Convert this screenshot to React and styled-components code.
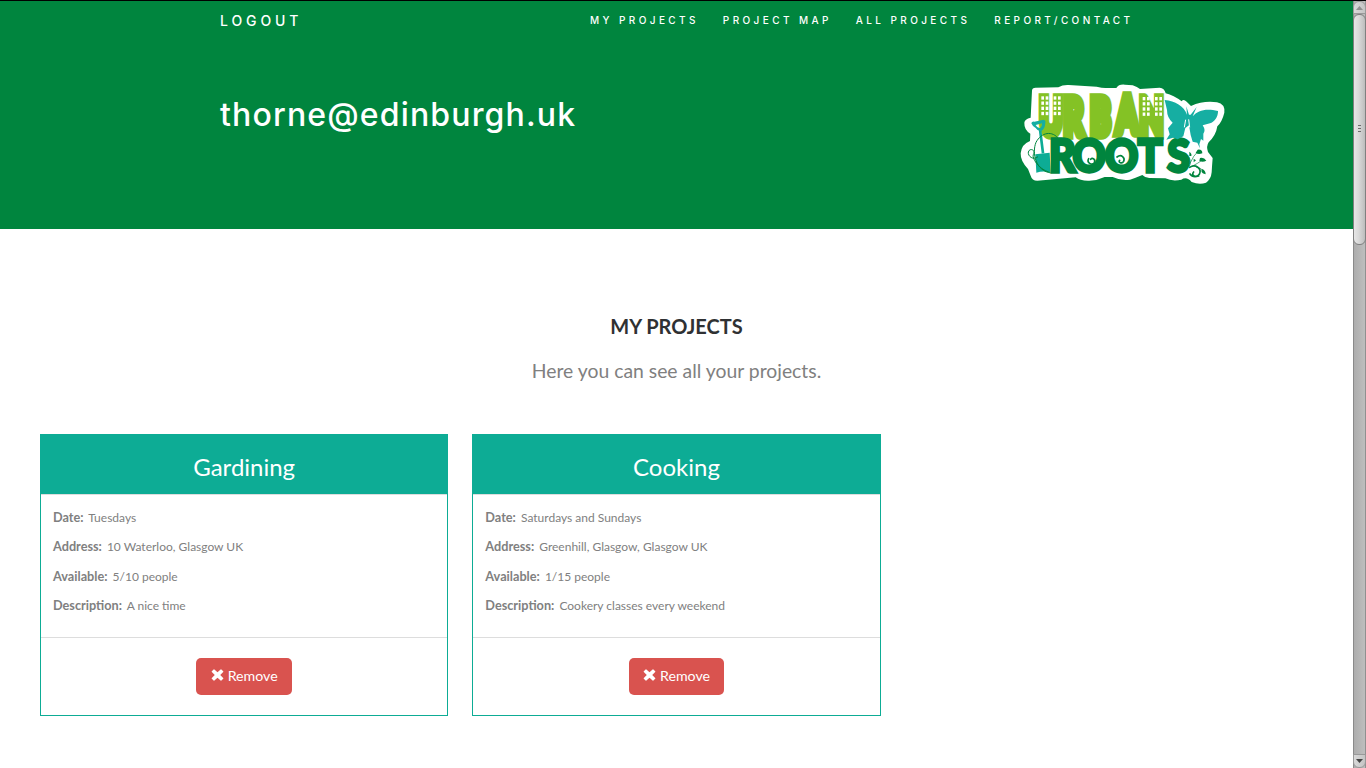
import React from "react";
import styled, { createGlobalStyle } from "styled-components";

const GlobalStyle = createGlobalStyle`
  * { box-sizing: border-box; }
  body { margin: 0; background: #fff; overflow: hidden; font-family: Lato, "Liberation Sans", sans-serif; }
`;

const Screen = styled.div`
  display: flex;
  height: 768px;
  border-top: 1px solid #000;
`;

const Page = styled.div`
  flex: 1;
  min-width: 0;
`;

const Header = styled.header`
  height: 228px;
  background: #00853e;
  color: #fff;
  font-family: Inter, "Liberation Sans", sans-serif;
`;

const Nav = styled.nav`
  display: flex;
  justify-content: space-between;
  align-items: center;
  height: 40px;
  padding: 0 219.5px 0 220px;
`;

const NavLinks = styled.div`
  display: flex;
  gap: 24px;
  padding-bottom: 2px;
`;

const NavLink = styled.a`
  font-size: ${(p) => (p.$large ? 14 : 10)}px;
  font-weight: 500;
  letter-spacing: ${(p) => p.$spacing}px;
  line-height: 20px;
  white-space: nowrap;
`;

const Banner = styled.div`
  display: flex;
  justify-content: space-between;
  padding: 34px 118px 0 220px;
`;

const Email = styled.h1`
  margin: 20px 0 0;
  font-size: 32px;
  font-weight: 500;
  line-height: 40px;
  letter-spacing: 1.15px;
`;

const LogoArt = styled.svg`
  display: block;
  width: 225px;
  height: 120px;
`;

const Intro = styled.section`
  padding-top: 84px;
  text-align: center;
`;

const Title = styled.h2`
  margin: 0;
  font-size: 20px;
  font-weight: 700;
  line-height: 26px;
  color: #2f3133;
`;

const Lead = styled.p`
  margin: 18px 0 0;
  font-size: 19.35px;
  line-height: 28px;
  color: #808080;
`;

const Projects = styled.section`
  display: grid;
  grid-template-columns: repeat(3, 1fr);
  padding: 49px 28px 0;
`;

const Card = styled.article`
  height: 282px;
  margin: 0 12px;
  border: 1px solid #0dac95;
  font-size: 12px;
  color: #808080;
`;

const CardTitle = styled.h3`
  margin: 0;
  height: 60px;
  padding-top: 16px;
  border-bottom: 1px solid #ddd;
  background: #0dac95;
  color: #fff;
  font-size: 24px;
  font-weight: 400;
  line-height: 32px;
  text-align: center;
`;

const Details = styled.div`
  height: 142px;
  padding: 8px 12px 0;
`;

const Detail = styled.div`
  height: 29.33px;
  font-size: 12px;
  line-height: 29px;
`;

const Label = styled.strong`
  font-size: 12.7px;
  font-weight: 700;
  margin-right: 2px;
`;

const CardFooter = styled.footer`
  display: flex;
  justify-content: center;
  padding-top: 20px;
  border-top: 1px solid #ddd;
`;

const RemoveButton = styled.button`
  display: flex;
  align-items: center;
  justify-content: center;
  gap: 4px;
  width: 95.4px;
  height: 37px;
  padding: 0 0 2px;
  border: 0;
  border-radius: 5px;
  background: #d9534f;
  color: #fff;
  font: 14.2px/20px Lato, sans-serif;
`;

const Cross = styled.svg`
  width: 13px;
  height: 12px;
  margin-top: -1px;
  fill: #fff;
`;

const Scrollbar = styled.div`
  display: flex;
  flex-direction: column;
  width: 13px;
  background: linear-gradient(90deg, #8a8a8a 0 1px, #adadad 1px, #bebebe 12px, #909090 12px);
`;

const ScrollArrow = styled.div`
  display: flex;
  align-items: center;
  justify-content: center;
  height: ${(p) => (p.$down ? 14 : 13)}px;
  border: 1px solid #999;
  border-radius: ${(p) => (p.$down ? "0 0 6px 6px" : "6px 6px 0 0")};
  background: linear-gradient(90deg, #d9d9d9, #c4c4c4);
`;

const Thumb = styled.div`
  display: flex;
  flex-direction: column;
  align-items: center;
  justify-content: center;
  gap: 2px;
  height: 231px;
  padding-bottom: 2px;
  margin-bottom: auto;
  border: 1px solid #808080;
  border-radius: 6px;
  background: linear-gradient(90deg, #e6e6e6, #dadada 40%, #bdbdbd);
`;

const Grip = styled.i`
  width: 3px;
  height: 1px;
  background: #6d6d6d;
`;

function Windows({ x, y }) {
  const cells = [];
  for (let row = 0; row < 4; row++) {
    for (const dx of [0, 13, 37, 50]) {
      cells.push(<rect key={`${row}-${dx}`} x={x + dx} y={y + row * 15.5} width="8" height="10" />);
    }
  }
  return <g fill="#fff">{cells}</g>;
}

function Logo() {
  return (
    <LogoArt viewBox="0 0 675 360" role="img">
      <path
        fill="#fff"
        d="M66 47Q66 38 77 38L145 37Q158 29 176 30L260 35Q276 39 286 39L319 39Q326 27 345 29L368 31Q382 36 390 42L449 38Q463 39 467 55Q491 61 515 79Q520 70 530 80L543 93Q581 76 621 82Q646 87 643 113Q636 141 622 154Q618 181 596 202Q588 214 594 231L608 249Q606 273 605 292Q603 313 588 323Q568 330 545 321Q530 303 514 314Q487 320 466 310L420 309Q407 310 397 300Q376 309 360 314Q333 318 308 306L284 306Q261 317 238 317Q211 318 197 307L82 317Q66 317 62 302L54 282Q31 258 32 235Q35 207 60 198L61 176Q42 164 43 143Q44 132 62 128Z"
      />
      <text
        transform="scale(.6 1)"
        x="148 267 401 531 648"
        y="179 179 179 175 179"
        fill="#84c225"
        stroke="#84c225"
        strokeWidth="29"
        fontFamily="Lato, sans-serif"
        fontWeight="900"
        fontSize="154"
      >
        URBAN
      </text>
      <Windows x={94} y={64} />
      <Windows x={398} y={66} />
      <path d="M90 163L99 235" stroke="#0dac95" strokeWidth="8" />
      <path
        fill="#16aea2"
        fillRule="evenodd"
        d="M64 145Q65 139 73 140L101 134Q108 136 106 143Q105 161 94 168Q84 170 77 159Q68 155 64 145ZM77 150Q83 161 91 159Q97 155 96 145Z"
      />
      <path fill="#0dac95" d="M76 238L119 233L122 292Q99 286 79 293Z" />
      <path
        fill="none"
        stroke="#00853e"
        strokeWidth="3"
        d="M147 193C127 165 94 172 78 202C65 234 77 289 124 294M84 245C70 257 53 244 55 231C59 217 79 225 70 239C65 248 84 281 118 292"
      />
      <text
        transform="scale(.92 1)"
        x="127 204 310 417 513"
        y="292"
        fill="#00853e"
        stroke="#00853e"
        strokeWidth="10"
        fontFamily="Lato, sans-serif"
        fontWeight="900"
        fontSize="134"
      >
        ROOTS
      </text>
      <path
        fill="none"
        stroke="#00853e"
        strokeWidth="5"
        strokeLinecap="round"
        d="M236 251C229 263 246 273 253 263C258 253 247 247 242 253M321 246C334 236 346 248 341 259C336 268 323 262 329 256"
      />
      <path
        fill="#16aea2"
        d="M464 75C495 78 522 93 531 119L529 94L537 119L542 119L560 96L548 124C563 106 588 99 624 108C625 125 612 142 600 145L578 151Q588 166 580 176L580 197L573 192L568 208L570 220L562 203L548 200L542 180L537 151L526 159L520 184L503 193L489 188L469 194L479 178L474 160L488 143Q471 128 471 105Z"
      />
      <path fill="none" stroke="#fff" strokeWidth="3" d="M527 134L523 157M536 133L539 157" />
      <g fill="none" stroke="#00853e" strokeLinecap="round">
        <path strokeWidth="5" d="M539 277C556 266 577 280 568 298C560 310 541 302 551 291M540 297Q548 309 566 303" />
        <path strokeWidth="2" d="M538 274Q544 264 538 248M540 265Q550 241 564 229M546 274Q566 264 574 257M559 276Q575 278 582 292" />
      </g>
      <path
        fill="#00853e"
        d="M563 224Q577 222 577 235Q564 240 557 233ZM570 249Q582 246 589 257Q577 263 568 257ZM576 282Q587 286 587 298Q576 296 574 288ZM538 230Q546 235 544 243L538 243ZM551 251L558 256L551 262Z"
      />
    </LogoArt>
  );
}

function CrossIcon() {
  return (
    <Cross viewBox="0 0 13 12">
      <path d="M3.4.4 6.5 3.3 9.6.4Q10 0 10.4.4L12.2 2.2Q12.6 2.6 12.2 3L9.2 6 12.2 9Q12.6 9.4 12.2 9.8L10.4 11.6Q10 12 9.6 11.6L6.5 8.7 3.4 11.6Q3 12 2.6 11.6L.8 9.8Q.4 9.4.8 9L3.8 6 .8 3Q.4 2.6.8 2.2L2.6.4Q3 0 3.4.4Z" />
    </Cross>
  );
}

const projects = [
  {
    name: "Gardining",
    details: [
      ["Date:", "Tuesdays"],
      ["Address:", "10 Waterloo, Glasgow UK"],
      ["Available:", "5/10 people"],
      ["Description:", "A nice time"],
    ],
  },
  {
    name: "Cooking",
    details: [
      ["Date:", "Saturdays and Sundays"],
      ["Address:", "Greenhill, Glasgow, Glasgow UK"],
      ["Available:", "1/15 people"],
      ["Description:", "Cookery classes every weekend"],
    ],
  },
];

const links = ["MY PROJECTS", "PROJECT MAP", "ALL PROJECTS", "REPORT/CONTACT"];

export default function App() {
  return (
    <>
      <GlobalStyle />
      <Screen>
        <Page>
          <Header>
            <Nav>
              <NavLink $large $spacing={3.9}>LOGOUT</NavLink>
              <NavLinks>
                {links.map((l) => (
                  <NavLink key={l} $spacing={3.4}>{l}</NavLink>
                ))}
              </NavLinks>
            </Nav>
            <Banner>
              <Email>thorne@edinburgh.uk</Email>
              <Logo />
            </Banner>
          </Header>
          <Intro>
            <Title>MY PROJECTS</Title>
            <Lead>Here you can see all your projects.</Lead>
          </Intro>
          <Projects>
            {projects.map((p) => (
              <Card key={p.name}>
                <CardTitle>{p.name}</CardTitle>
                <Details>
                  {p.details.map(([label, value]) => (
                    <Detail key={label}>
                      <Label>{label}</Label> {value}
                    </Detail>
                  ))}
                </Details>
                <CardFooter>
                  <RemoveButton>
                    <CrossIcon />
                    Remove
                  </RemoveButton>
                </CardFooter>
              </Card>
            ))}
          </Projects>
        </Page>
        <Scrollbar>
          <ScrollArrow>
            <svg width="7" height="4" viewBox="0 0 7 4"><path d="M0 4 3.5 0 7 4Z" fill="#8f8f8f" /></svg>
          </ScrollArrow>
          <Thumb>
            <Grip />
            <Grip />
            <Grip />
          </Thumb>
          <ScrollArrow $down>
            <svg width="7" height="4" viewBox="0 0 7 4"><path d="M0 0 3.5 4 7 0Z" fill="#444" /></svg>
          </ScrollArrow>
        </Scrollbar>
      </Screen>
    </>
  );
}
